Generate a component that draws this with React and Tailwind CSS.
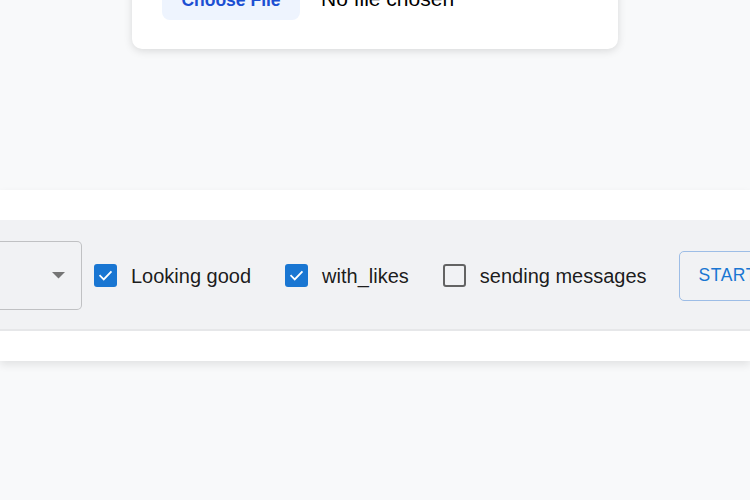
import React from "react";

function CheckedBox() {
  return (
    <span className="flex h-[23px] w-[23px] shrink-0 items-center justify-center rounded-[3px] bg-[#1976d2]">
      <svg width="17" height="17" viewBox="0 0 24 24" fill="none">
        <path d="M4.5 12.5l5 5L19.5 7" stroke="white" strokeWidth="2.6" strokeLinecap="square" />
      </svg>
    </span>
  );
}

function EmptyBox() {
  return <span className="block h-[23px] w-[23px] shrink-0 rounded-[3px] border-[2.5px] border-[#636363]" />;
}

export default function App() {
  return (
    <div className="min-h-[500px] w-[750px] overflow-hidden bg-[#f8f9fa] font-[family-name:Liberation_Sans,Arial,sans-serif]">
      <div className="ml-[132px] -mt-[40px] h-[89px] w-[486px] rounded-[10px] bg-white shadow-[0_2px_8px_rgba(0,0,0,0.13)]">
        <div className="flex items-center whitespace-nowrap pl-[30px] pt-[14px]">
          <div className="flex h-[46px] w-[138px] shrink-0 items-center justify-center rounded-[8px] bg-[#eef4fe] pt-[6px] text-[17.5px] font-bold text-[#1c4fd2]">
            Choose File
          </div>
          <span className="ml-[21px] pt-[3px] text-[21px] text-black">No file chosen</span>
        </div>
      </div>

      <div className="mt-[141px] h-[171px] bg-white pt-[30px] shadow-[0_4px_8px_rgba(0,0,0,0.09)]">
        <div className="flex h-[111px] items-center whitespace-nowrap border-b-2 border-[#e6e7e9] bg-[#f1f2f4] pt-[2px] text-[20px] text-[rgba(0,0,0,0.9)]">
          <div className="flex h-[69px] w-[82px] shrink-0 items-center justify-end rounded-r-[5px] border border-l-0 border-[#c0c1c3] pr-[16px]">
            <svg width="13" height="7" viewBox="0 0 13 7">
              <path d="M0 0h13L6.5 6.5z" fill="#757575" />
            </svg>
          </div>
          <div className="ml-[12px] flex shrink-0 items-center">
            <CheckedBox />
            <span className="ml-[14px]">Looking good</span>
          </div>
          <div className="ml-[34px] flex shrink-0 items-center">
            <CheckedBox />
            <span className="ml-[14px]">with_likes</span>
          </div>
          <div className="ml-[34px] flex shrink-0 items-center">
            <EmptyBox />
            <span className="ml-[14px]">sending messages</span>
          </div>
          <div className="ml-[32px] flex h-[50px] shrink-0 items-center rounded-[5px] border border-[#9dbde6] pl-[19px] pr-[19px] text-[17.5px] font-medium tracking-[0.5px] text-[#1976d2]">
            START
          </div>
        </div>
      </div>
    </div>
  );
}
